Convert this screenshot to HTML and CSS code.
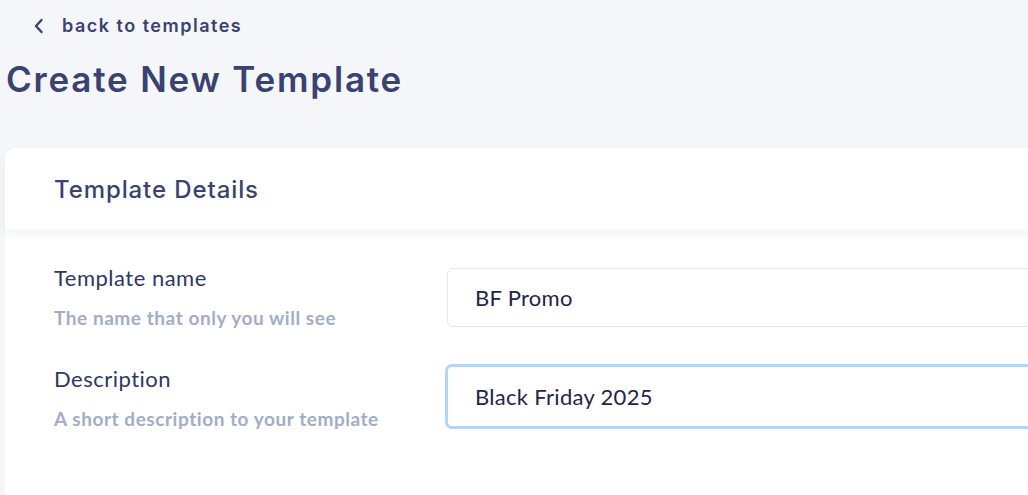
FILE: index.html
```html
<!DOCTYPE html>
<html lang="en">
<head>
<meta charset="utf-8">
<title>Create New Template</title>
<link rel="stylesheet" href="styles.css">
</head>
<body>
<div class="page">
  <a class="back" href="#">
    <svg class="back-icon" width="12" height="16" viewBox="0 0 12 16" aria-hidden="true"><path d="M8.5 2 L3 8 L8.5 14" fill="none" stroke="#394270" stroke-width="2.4" stroke-linecap="round" stroke-linejoin="round"/></svg>
    <span>back to templates</span>
  </a>
  <h1 class="title">Create New Template</h1>
  <section class="card">
    <header class="card-head">
      <h2>Template Details</h2>
    </header>
    <div class="card-body">
      <div class="row">
        <div class="label">
          <div class="label-main">Template name</div>
          <div class="label-sub">The name that only you will see</div>
        </div>
        <div class="field"><input class="input" type="text" value="BF Promo"></div>
      </div>
      <div class="row row-focus">
        <div class="label">
          <div class="label-main">Description</div>
          <div class="label-sub">A short description to your template</div>
        </div>
        <div class="field"><input class="input focused" type="text" value="Black Friday 2025"></div>
      </div>
    </div>
  </section>
</div>
</body>
</html>
```

FILE: styles.css
```css
html, body {
  margin: 0;
  padding: 0;
  background: #f5f6fa;
  overflow: hidden;
}
body {
  font-family: "Lato", "Liberation Sans", sans-serif;
  color: #394270;
}
.page {
  padding: 0 0 0 5px;
}
.back {
  display: flex;
  align-items: center;
  gap: 17px;
  height: 51px;
  padding-left: 28px;
  text-decoration: none;
  color: #394270;
  font-family: "Inter", sans-serif;
  font-weight: 600;
  font-size: 18px;
  letter-spacing: 1.5px;
}
.back-icon {
  display: block;
}
.title {
  margin: 0 0 0 1px;
  font-family: "Inter", sans-serif;
  font-weight: 600;
  font-size: 35px;
  line-height: 56px;
  color: #394270;
  letter-spacing: 1.8px;
}
.card {
  margin-top: 41px;
  width: calc(100% + 40px);
  background: #fff;
  border-radius: 10px 0 0 0;
  min-height: 360px;
}
.card-head {
  height: 82px;
  display: flex;
  align-items: center;
  padding-left: 49px;
  border-radius: 10px 0 0 0;
  box-shadow: 0 4px 10px rgba(40, 50, 90, 0.06);
  position: relative;
}
.card-head h2 {
  margin: 0;
  font-family: "Inter", sans-serif;
  font-weight: 500;
  font-size: 24px;
  letter-spacing: 0.9px;
  color: #394270;
}
.card-body {
  padding: 38px 0 0 49px;
  display: flex;
  flex-direction: column;
  gap: 35px;
}
.row {
  display: flex;
  align-items: flex-start;
}
.label {
  width: 393px;
  flex: none;
  margin-top: -3px;
}
.row-focus .label {
  margin-top: 2px;
}
.label-main {
  font-size: 22px;
  line-height: 26px;
  letter-spacing: 0.5px;
  color: #2f3763;
}
.label-sub {
  margin-top: 16px;
  font-size: 19px;
  font-weight: 700;
  line-height: 22px;
  letter-spacing: 0.55px;
  color: #a3adc3;
}
.field {
  flex: 1;
}
.input {
  box-sizing: border-box;
  width: 100%;
  height: 59px;
  border: 1px solid #e3e6ef;
  border-radius: 6px;
  padding: 0 0 0 27px;
  font-family: "Lato", sans-serif;
  font-size: 22px;
  letter-spacing: 0.3px;
  color: #1f2548;
  background: #fff;
  outline: none;
}
.input.focused {
  height: 65px;
  border: 3px solid #b5d3fb;
  margin-left: -2px;
  padding-left: 27px;
  border-radius: 7px;
}
```
